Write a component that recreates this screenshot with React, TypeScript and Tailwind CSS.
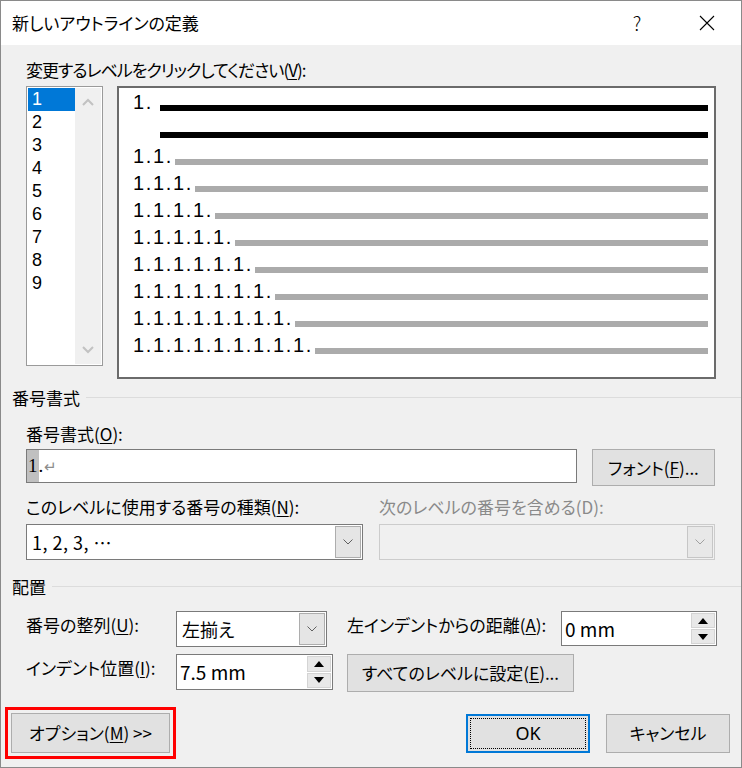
import React from "react";

const ui =
  "font-['Noto_Sans_CJK_JP','Noto_Sans',sans-serif] [font-feature-settings:'palt']";

const previewRows = [
  { label: "1.", w: "w-[27px]", bar: "bg-black" },
  { label: "", w: "w-[27px]", bar: "bg-black" },
  { label: "1.1.", w: "w-[42px]", bar: "bg-[#ababab]" },
  { label: "1.1.1.", w: "w-[62px]", bar: "bg-[#ababab]" },
  { label: "1.1.1.1.", w: "w-[82px]", bar: "bg-[#ababab]" },
  { label: "1.1.1.1.1.", w: "w-[102px]", bar: "bg-[#ababab]" },
  { label: "1.1.1.1.1.1.", w: "w-[122px]", bar: "bg-[#ababab]" },
  { label: "1.1.1.1.1.1.1.", w: "w-[142px]", bar: "bg-[#ababab]" },
  { label: "1.1.1.1.1.1.1.1.", w: "w-[162px]", bar: "bg-[#ababab]" },
  { label: "1.1.1.1.1.1.1.1.1.", w: "w-[182px]", bar: "bg-[#ababab]" },
];

const levels = ["1", "2", "3", "4", "5", "6", "7", "8", "9"];

function Chevron({ up, color }: { up?: boolean; color: string }) {
  return (
    <svg width="12" height="8" viewBox="0 0 12 8" fill="none">
      <polyline
        points={up ? "1,7 6,2 11,7" : "1,1 6,6 11,1"}
        stroke={color}
        strokeWidth="2"
      />
    </svg>
  );
}

function DropButton({ disabled }: { disabled?: boolean }) {
  return (
    <div
      className={
        disabled
          ? "flex w-[26px] items-center justify-center border border-[#c6c6c6] bg-[#e8e8e8]"
          : "flex w-[26px] items-center justify-center border border-[#adadad] bg-[#e5e5e5]"
      }
    >
      <svg width="10" height="6" viewBox="0 0 10 6" fill="none">
        <polyline
          points="0.5,0.5 5,5 9.5,0.5"
          stroke={disabled ? "#a0a0a0" : "#606060"}
          strokeWidth="1"
        />
      </svg>
    </div>
  );
}

function SpinButtons() {
  return (
    <div className="flex w-[25px] flex-col gap-px py-px pr-px">
      <div className="flex flex-1 items-center justify-center border border-[#d4d4d4] bg-[#e8e8e8]">
        <svg width="10" height="6" viewBox="0 0 10 6">
          <polygon points="0,6 5,0 10,6" fill="#000" />
        </svg>
      </div>
      <div className="flex flex-1 items-center justify-center border border-[#d4d4d4] bg-[#e8e8e8]">
        <svg width="10" height="6" viewBox="0 0 10 6">
          <polygon points="0,0 5,6 10,0" fill="#000" />
        </svg>
      </div>
    </div>
  );
}

function GroupLabel({ children }: { children: React.ReactNode }) {
  return (
    <div className="flex items-center pl-[11px]">
      <span>{children}</span>
      <div className="ml-[6px] mt-[-2px] h-px flex-1 bg-[#dcdcdc]" />
    </div>
  );
}

function Btn({
  children,
  className,
}: {
  children: React.ReactNode;
  className: string;
}) {
  return (
    <button
      type="button"
      className={`flex items-center justify-center border border-[#adadad] bg-[#e1e1e1] text-black ${className}`}
    >
      {children}
    </button>
  );
}

export default function App() {
  return (
    <div
      className={`flex h-[768px] w-[742px] flex-col border border-[#8a8a8a] bg-[#f0f0f0] text-[17px] leading-[24px] text-black ${ui}`}
    >
      {/* title bar */}
      <div className="flex h-[44px] shrink-0 items-center bg-white pl-[11px]">
        <span className="text-[17px]">新しいアウトラインの定義</span>
        <div className="ml-auto flex h-full items-center">
          <div className="flex w-[46px] items-center justify-center text-[19px] font-light">
            ?
          </div>
          <div className="ml-[24px] mr-[11px] flex w-[46px] items-center justify-center">
            <svg width="16" height="16" viewBox="0 0 16 16">
              <path d="M1 1 L15 15 M15 1 L1 15" stroke="#000" strokeWidth="1.1" />
            </svg>
          </div>
        </div>
      </div>

      {/* level picker */}
      <div className="mt-[13px] pl-[25px] tracking-[-1px]">
        変更するレベルをクリックしてください(<u className="underline-offset-2">V</u>):
      </div>
      <div className="mt-[4px] flex items-start pl-[25px]">
        <div className="flex h-[280px] w-[77px] border border-[#9a9a9a] bg-white p-px">
          <div className="flex w-[47px] flex-col">
            {levels.map((l, i) => (
              <div
                key={l}
                className={
                  i === 0
                    ? "h-[23px] bg-[#0078d7] pl-[4px] font-['Liberation_Sans',sans-serif] text-[18px] leading-[23px] text-white"
                    : "h-[23px] pl-[4px] font-['Liberation_Sans',sans-serif] text-[18px] leading-[23px]"
                }
              >
                {l}
              </div>
            ))}
          </div>
          <div className="flex flex-1 flex-col items-center justify-between bg-[#f0f0f0] py-[10px]">
            <Chevron up color="#c2c2c2" />
            <Chevron color="#c2c2c2" />
          </div>
        </div>

        <div className="ml-[14px] flex h-[293px] w-[599px] flex-col border-2 border-[#6b6b6b] bg-white pl-[14px] pr-[6px]">
          {previewRows.map((r, i) => (
            <div key={i} className="flex h-[27px] shrink-0 items-end">
              <span
                className={`${r.w} mb-[3px] shrink-0 font-['Liberation_Sans',sans-serif] text-[20px] leading-[20px] tracking-[1.66px] [font-feature-settings:normal]`}
              >
                {r.label}
              </span>
              <div className={`mb-[4px] h-[6px] flex-1 ${r.bar}`} />
            </div>
          ))}
        </div>
      </div>

      {/* number format */}
      <div className="mt-[7px]">
        <GroupLabel>番号書式</GroupLabel>
      </div>
      <div className="mt-[12px] pl-[25px]">
        番号書式(<u className="underline-offset-2">O</u>):
      </div>
      <div className="mt-[3px] flex items-start pl-[25px]">
        <div className="flex h-[34px] w-[551px] items-stretch border border-[#7a7a7a] bg-white">
          <span className="flex items-center bg-[#c0c0c0] px-px font-['Liberation_Serif',serif] text-[19px]">
            1
          </span>
          <span className="flex items-center font-['Liberation_Serif',serif] text-[19px]">.</span>
          <span className="ml-px flex items-center text-[15px] text-[#8c8c8c]">↵</span>
        </div>
        <Btn className="ml-[15px] h-[37px] w-[123px]">
          <span>
            フォント(<u className="underline-offset-2">F</u>)...
          </span>
        </Btn>
      </div>

      <div className="mt-[9px] grid grid-cols-[337px_336px] gap-x-[16px] pl-[25px]">
        <div>
          このレベルに使用する番号の種類(<u className="underline-offset-2">N</u>):
        </div>
        <div className="text-[#8a8a8a]">次のレベルの番号を含める(D):</div>
        <div className="mt-[5px] flex h-[36px] border border-[#7a7a7a] bg-white p-px">
          <span className="flex flex-1 items-center pl-[4px] text-[18px] tracking-[0.5px]">
            1, 2, 3, …
          </span>
          <DropButton />
        </div>
        <div className="mt-[5px] flex h-[36px] border border-[#cccccc] bg-[#f0f0f0] p-px">
          <span className="flex-1" />
          <DropButton disabled />
        </div>
      </div>

      {/* placement */}
      <div className="mt-[15px]">
        <GroupLabel>配置</GroupLabel>
      </div>
      <div className="mt-[12px] flex items-start pl-[25px]">
        <span className="mt-[2px] w-[150px]">
          番号の整列(<u className="underline-offset-2">U</u>):
        </span>
        <div className="flex h-[36px] w-[151px] border border-[#7a7a7a] bg-white p-px">
          <span className="flex flex-1 items-center pl-[4px] text-[18px]">左揃え</span>
          <DropButton />
        </div>
        <span className="ml-[20px] mt-[2px] w-[214px]">
          左インデントからの距離(<u className="underline-offset-2">A</u>):
        </span>
        <div className="flex h-[35px] w-[156px] border border-[#7a7a7a] bg-white">
          <span className="flex flex-1 items-center pl-[3px] text-[19px]">0 mm</span>
          <SpinButtons />
        </div>
      </div>
      <div className="mt-[7px] flex items-start pl-[25px]">
        <span className="mt-[2px] w-[150px]">
          インデント位置(<u className="underline-offset-2">I</u>):
        </span>
        <div className="flex h-[36px] w-[157px] border border-[#7a7a7a] bg-white">
          <span className="flex flex-1 items-center pl-[3px] text-[19px]">7.5 mm</span>
          <SpinButtons />
        </div>
        <Btn className="ml-[14px] h-[38px] w-[227px]">
          <span>
            すべてのレベルに設定(<u className="underline-offset-2">E</u>)...
          </span>
        </Btn>
      </div>

      {/* bottom buttons */}
      <div className="mt-[15px] flex items-center pr-[11px]">
        <div className="ml-[4px] border-[3px] border-[#ff0000] p-[3px]">
          <Btn className="h-[40px] w-[159px]">
            <span>
              オプション(<u className="underline-offset-2">M</u>) &gt;&gt;
            </span>
          </Btn>
        </div>
        <button
          type="button"
          className="ml-auto flex h-[39px] w-[124px] items-center justify-center border-2 border-[#0078d7] bg-[#e1e1e1] p-[2px]"
        >
          <span className="flex h-full w-full items-center justify-center border border-dotted border-black font-['Noto_Sans',sans-serif] text-[18px]">
            OK
          </span>
        </button>
        <Btn className="ml-[16px] h-[39px] w-[124px]">
          <span>キャンセル</span>
        </Btn>
      </div>
    </div>
  );
}
